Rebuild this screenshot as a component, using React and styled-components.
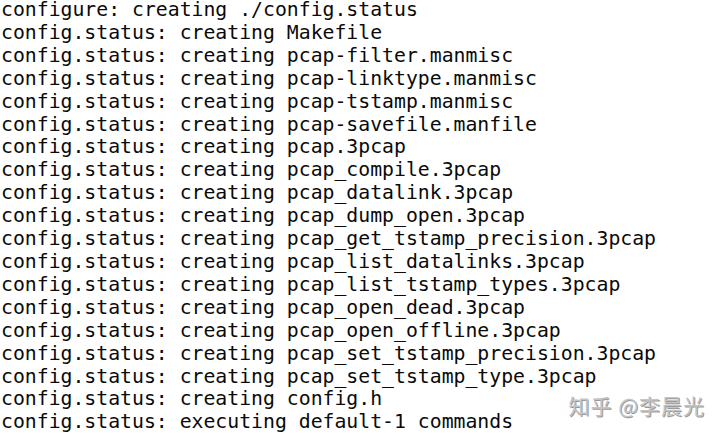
import React from 'react';
import styled, { createGlobalStyle } from 'styled-components';

const GlobalStyle = createGlobalStyle`
  html, body {
    margin: 0;
    padding: 0;
    background: #ffffff;
  }
`;

const Screen = styled.div`
  position: relative;
  width: 720px;
  height: 433px;
  overflow: hidden;
  background: #ffffff;
`;

const Output = styled.pre`
  margin: 0;
  padding: 0 0 0 1px;
  margin-top: -1px;
  font-family: "DejaVu Sans Mono", "Liberation Mono", monospace;
  font-size: 19.8px;
  line-height: 22.9px;
  color: #0a0a0a;
  white-space: pre;
`;

const Watermark = styled.div`
  position: absolute;
  right: 15px;
  bottom: 13px;
  font-family: "Noto Sans CJK SC", "Noto Sans", sans-serif;
  font-size: 21px;
  letter-spacing: 1px;
  color: #c4c4c4;
  text-shadow: 1px 1px 0 #9a9a9a;
`;

const lines = [
  'configure: creating ./config.status',
  'config.status: creating Makefile',
  'config.status: creating pcap-filter.manmisc',
  'config.status: creating pcap-linktype.manmisc',
  'config.status: creating pcap-tstamp.manmisc',
  'config.status: creating pcap-savefile.manfile',
  'config.status: creating pcap.3pcap',
  'config.status: creating pcap_compile.3pcap',
  'config.status: creating pcap_datalink.3pcap',
  'config.status: creating pcap_dump_open.3pcap',
  'config.status: creating pcap_get_tstamp_precision.3pcap',
  'config.status: creating pcap_list_datalinks.3pcap',
  'config.status: creating pcap_list_tstamp_types.3pcap',
  'config.status: creating pcap_open_dead.3pcap',
  'config.status: creating pcap_open_offline.3pcap',
  'config.status: creating pcap_set_tstamp_precision.3pcap',
  'config.status: creating pcap_set_tstamp_type.3pcap',
  'config.status: creating config.h',
  'config.status: executing default-1 commands',
];

export default function App() {
  return (
    <>
      <GlobalStyle />
      <Screen>
        <Output>{lines.join('\n')}</Output>
        <Watermark>知乎 @李晨光</Watermark>
      </Screen>
    </>
  );
}
